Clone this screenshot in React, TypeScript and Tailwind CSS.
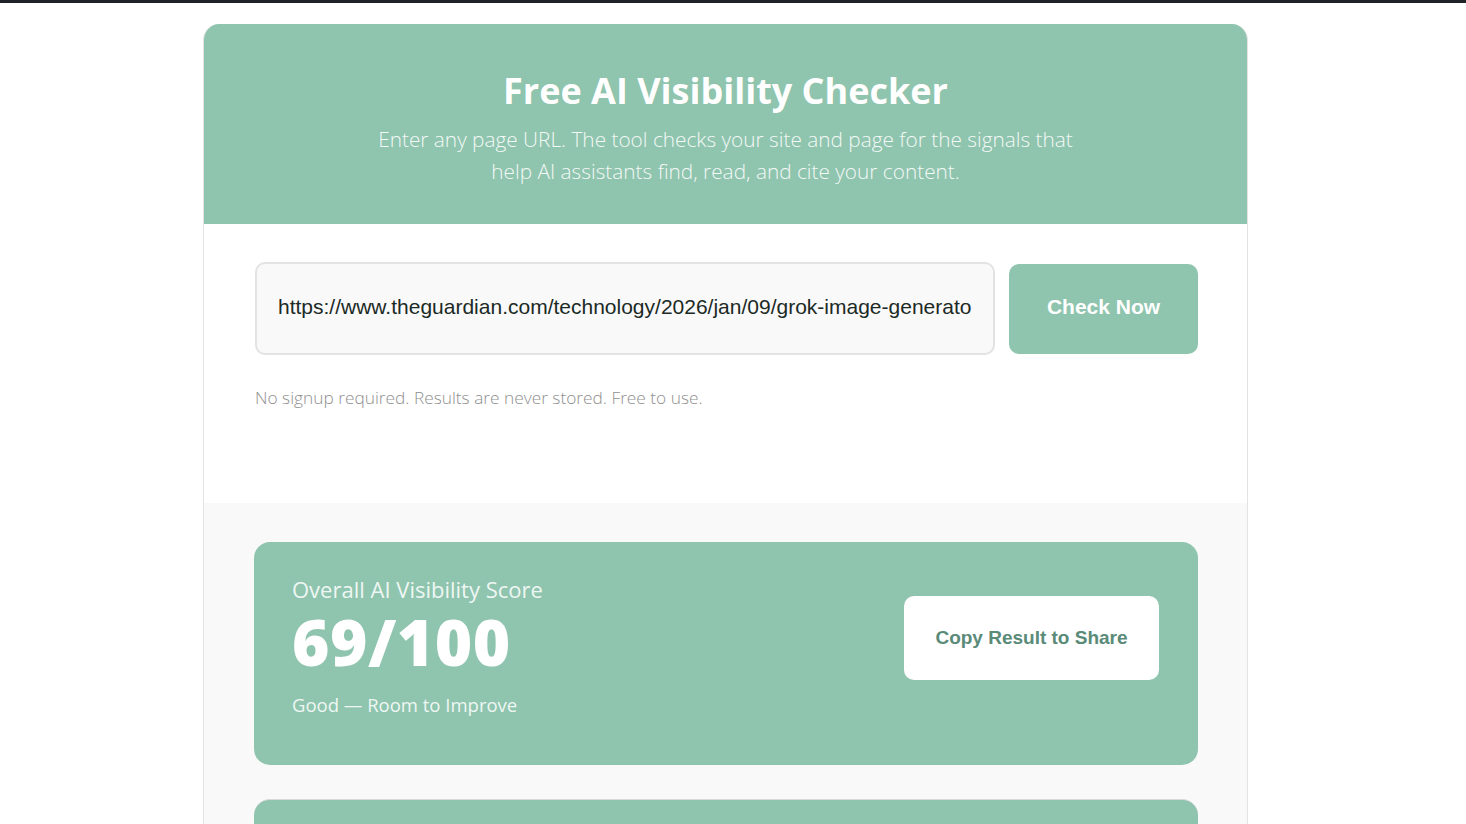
import * as React from "react";

const SANS = "font-['Open_Sans',_'Noto_Sans',_sans-serif]";
const ARIAL = "font-['Liberation_Sans',_Arial,_sans-serif]";

function ScoreCard() {
  return (
    <div className="flex items-start justify-between rounded-2xl bg-[#8fc4ae] pl-[38px] pr-[39px] pt-[32px] pb-[48px]">
      <div className={SANS}>
        <div className="text-[22px] leading-[30px] text-[#eef7f3]">Overall AI Visibility Score</div>
        <div className="mt-[6px] text-[64px] font-extrabold leading-[64px] tracking-[0.5px] text-white">69/100</div>
        <div className="mt-[19px] text-[18.5px] leading-[24px] text-[#eef7f3]">Good — Room to Improve</div>
      </div>
      <button
        className={`${ARIAL} mt-[22px] h-[84px] w-[255px] rounded-[10px] bg-white text-[19px] font-bold text-[#5a8a78]`}
      >
        Copy Result to Share
      </button>
    </div>
  );
}

export default function App() {
  return (
    <div className="min-h-screen bg-white">
      <div className="h-[3px] bg-[#1f2328]" />
      <div className="ml-[203px] mt-[21px] w-[1045px] overflow-hidden rounded-t-2xl border-x border-[#e3e3e3]">
        {/* Header */}
        <div className={`${SANS} flex h-[200px] flex-col items-center bg-[#8fc4ae] pt-[44px] text-center`}>
          <h1 className="text-[36px] font-bold leading-[46px] text-white">Free AI Visibility Checker</h1>
          <p className="mt-[9px] w-[730px] text-[20.8px] font-light leading-[32px] text-[#f3f9f6]">
            Enter any page URL. The tool checks your site and page for the signals that help AI assistants find, read,
            and cite your content.
          </p>
        </div>

        {/* Form */}
        <div className="h-[279px] bg-white pl-[51px] pr-[49px] pt-[38px]">
          <div className="flex items-center gap-[14px]">
            <input
              readOnly
              value="https://www.theguardian.com/technology/2026/jan/09/grok-image-generator-outcry-sexualised-ai-imagery"
              className={`${ARIAL} h-[93px] w-[740px] rounded-[10px] border-2 border-[#e3e3e3] bg-[#f9f9f9] px-[21px] pb-[3px] text-[21px] text-[#1b2a25] outline-none`}
            />
            <button
              className={`${ARIAL} h-[90px] flex-1 rounded-[10px] bg-[#8fc4ae] pb-[3px] text-[21px] font-bold text-white`}
            >
              Check Now
            </button>
          </div>
          <p className={`${SANS} mt-[30px] text-[17.3px] font-light text-[#909090]`}>
            No signup required. Results are never stored. Free to use.
          </p>
        </div>

        {/* Results */}
        <div className="bg-[#f9f9f9] pl-[50px] pr-[49px] pt-[39px]">
          <ScoreCard />
          <div className="mt-[34px] h-[60px] rounded-t-2xl border-t border-[#d9d9d9] bg-[#8fc4ae]" />
        </div>
      </div>
    </div>
  );
}
